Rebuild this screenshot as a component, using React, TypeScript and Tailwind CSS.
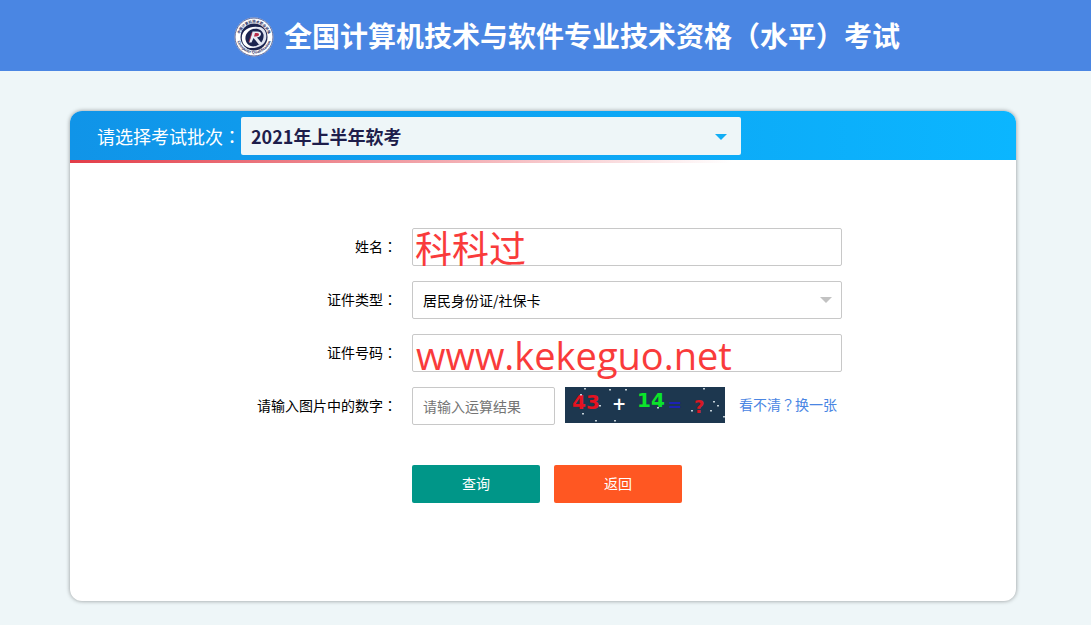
import { ReactNode, useState } from "react";

const Colon = () => (
  <span className="font-['Noto_Sans_CJK_TC',sans-serif]">：</span>
);

const Logo = () => (
  <svg viewBox="0 0 80 80" className="h-10 w-10 flex-none" aria-hidden="true">
    <defs>
      <path id="ringTop" d="M11 41a29 29 0 0 1 58 0" />
      <path id="ringBottom" d="M5 38a35 35 0 0 0 70 0" />
    </defs>
    <circle cx="40" cy="40" r="39" fill="#fff" />
    <circle cx="40" cy="40" r="38" fill="none" stroke="#2b3a78" strokeWidth="1.5" />
    <circle cx="40" cy="40" r="27" fill="#1b2450" />
    <text fontSize="7" fontWeight="700" fill="#1f2b62" textAnchor="middle" className="font-['Noto_Sans_CJK_SC',sans-serif]">
      <textPath href="#ringTop" startOffset="50%">中国计算机技术职业资格</textPath>
    </text>
    <text fontSize="8" fontWeight="700" fill="#1f2b62" textAnchor="middle" className="font-['Liberation_Sans',sans-serif]">
      <textPath href="#ringBottom" startOffset="50%">Computer Qualification</textPath>
    </text>
    <path d="M16 46C12 25 36 14 57 22C38 19 21 29 23 45C25 57 36 61 47 59C32 67 18 59 16 46Z" fill="#fff" />
    <path d="M64 33C69 54 48 67 28 59C48 62 61 49 59 35C55 24 45 22 34 25C48 16 61 20 64 33Z" fill="#dfe3f0" />
    <path d="M37 29L30 51H35L39 42L49 54H57L46 41C56 39 57 29 47 29Z" fill="#e8ebf5" />
    <path d="M42 32L40 39H44C51 39 52 32 46 32Z" fill="#b92a4a" />
    <path d="M36 31L30 50" stroke="#b92a4a" strokeWidth="1.5" />
  </svg>
);

const specks = [
  [20, 1], [16, 7], [45, 2], [61, 2], [139, 1], [35, 18], [18, 26], [31, 33],
  [50, 33], [93, 20], [127, 23], [149, 14], [153, 18], [146, 23], [159, 29],
];

const Captcha = () => (
  <svg viewBox="0 0 160 36" className="h-9 w-40 flex-none bg-[#1d374f] font-['DejaVu_Sans',sans-serif]" fontSize="20">
    <text x="7" y="22" fill="#e51220" fontWeight="700">43</text>
    <text x="47" y="23" fill="#fff" fontSize="17" fontWeight="700">+</text>
    <text x="72" y="20" fill="#0be42a" fontWeight="700">14</text>
    <text x="103" y="24" fill="#1c22b4" fontSize="17" fontWeight="700">=</text>
    <text x="129" y="26" fill="#d81824" fontSize="18" fontWeight="700">?</text>
    {specks.map(([x, y]) => (
      <rect key={`${x}-${y}`} x={x - 1} y={y} width="2" height="1.5" fill="#c3d0d8" />
    ))}
  </svg>
);

const Arrow = ({ className }: { className: string }) => (
  <svg viewBox="0 0 12 6" className={`pointer-events-none absolute h-[6px] w-3 ${className}`} aria-hidden="true">
    <path d="M0 0H12L6 6Z" fill="currentColor" />
  </svg>
);

const Row = ({ id, label, children }: { id: string; label: string; children: ReactNode }) => (
  <div className="flex items-center gap-[15px]">
    <label htmlFor={id} className="w-[327px] flex-none pb-[2px] text-right text-sm">
      {label}
      <Colon />
    </label>
    {children}
  </div>
);

const field = "h-[38px] w-full rounded-xs border border-[#c8c8c8] bg-white px-[10px] text-sm outline-none";

export default function App() {
  const [batch, setBatch] = useState("2021-1");
  const [cardType, setCardType] = useState("id");

  return (
    <div className="min-h-screen bg-[#eef6f8] pb-6 font-['Noto_Sans_CJK_SC',sans-serif] text-black">
      <header className="flex h-[71px] items-center justify-center gap-[10px] bg-[#4a86e3] pt-[2px] pl-[43px] text-white">
        <Logo />
        <h1 className="pb-[3px] text-[28px] leading-10 font-bold whitespace-nowrap">
          全国计算机技术与软件专业技术资格（水平）考试
        </h1>
      </header>

      <main className="mt-10 mr-[75px] ml-[70px] overflow-hidden rounded-xl bg-white shadow-[0_0_4px_rgba(0,0,0,0.4)]">
        <div className="flex items-center bg-linear-to-r from-[#1094e8] to-[#0bb6ff] pt-[6px] pb-[5px] pl-[27px]">
          <label htmlFor="batch" className="flex-none text-lg text-white">
            请选择考试批次
            <Colon />
          </label>
          <div className="relative w-[500px]">
            <select
              id="batch"
              value={batch}
              onChange={(e) => setBatch(e.target.value)}
              className="h-[38px] w-full appearance-none rounded-xs bg-[#eef6f8] px-[10px] text-lg font-bold text-[#1e1e4b] outline-none"
            >
              <option value="2021-1">2021年上半年软考</option>
            </select>
            <Arrow className="top-[17px] right-[14px] text-[#12aef5]" />
          </div>
        </div>
        <div className="h-[3px] bg-linear-to-r from-[#e23c48] to-transparent to-70%" />

        <form className="flex flex-col gap-[15px] pt-[65px] pb-[98px]" onSubmit={(e) => e.preventDefault()}>
          <Row id="name" label="姓名">
            <div className="relative w-[430px]">
              <input id="name" type="text" className={field} />
              <span className="pointer-events-none absolute inset-y-0 left-[3px] flex items-center text-[37px] leading-none text-[#f93b3b]">
                科科过
              </span>
            </div>
          </Row>
          <Row id="card-type" label="证件类型">
            <div className="relative w-[430px]">
              <select
                id="card-type"
                value={cardType}
                onChange={(e) => setCardType(e.target.value)}
                className={`${field} appearance-none`}
              >
                <option value="id">居民身份证/社保卡</option>
              </select>
              <Arrow className="top-4 right-[10px] text-[#c2c2c2]" />
            </div>
          </Row>
          <Row id="card-no" label="证件号码">
            <div className="relative w-[430px]">
              <input id="card-no" type="text" className={field} />
              <span className="pointer-events-none absolute inset-y-0 left-1 flex items-center pt-1 font-['Open_Sans',sans-serif] text-[38px] leading-none text-[#f93b3b]">
                www.kekeguo.net
              </span>
            </div>
          </Row>
          <Row id="captcha" label="请输入图片中的数字">
            <div className="flex items-start gap-[10px]">
              <div className="w-[143px]">
                <input id="captcha" type="text" placeholder="请输入运算结果" className={`${field} placeholder:text-[#757575]`} />
              </div>
              <Captcha />
              <a href="#" className="ml-1 text-sm leading-[34px] text-[#4a86e3]">
                看不清<span className="font-['Noto_Sans_CJK_TC',sans-serif]">？</span>换一张
              </a>
            </div>
          </Row>
          <div className="mt-[25px] flex gap-[14px] pl-[342px] text-sm text-white">
            <button type="submit" className="h-[38px] w-32 rounded-xs bg-[#009688] pb-[2px]">
              查询
            </button>
            <button type="button" className="h-[38px] w-32 rounded-xs bg-[#ff5722] pb-[2px]">
              返回
            </button>
          </div>
        </form>
      </main>
    </div>
  );
}
